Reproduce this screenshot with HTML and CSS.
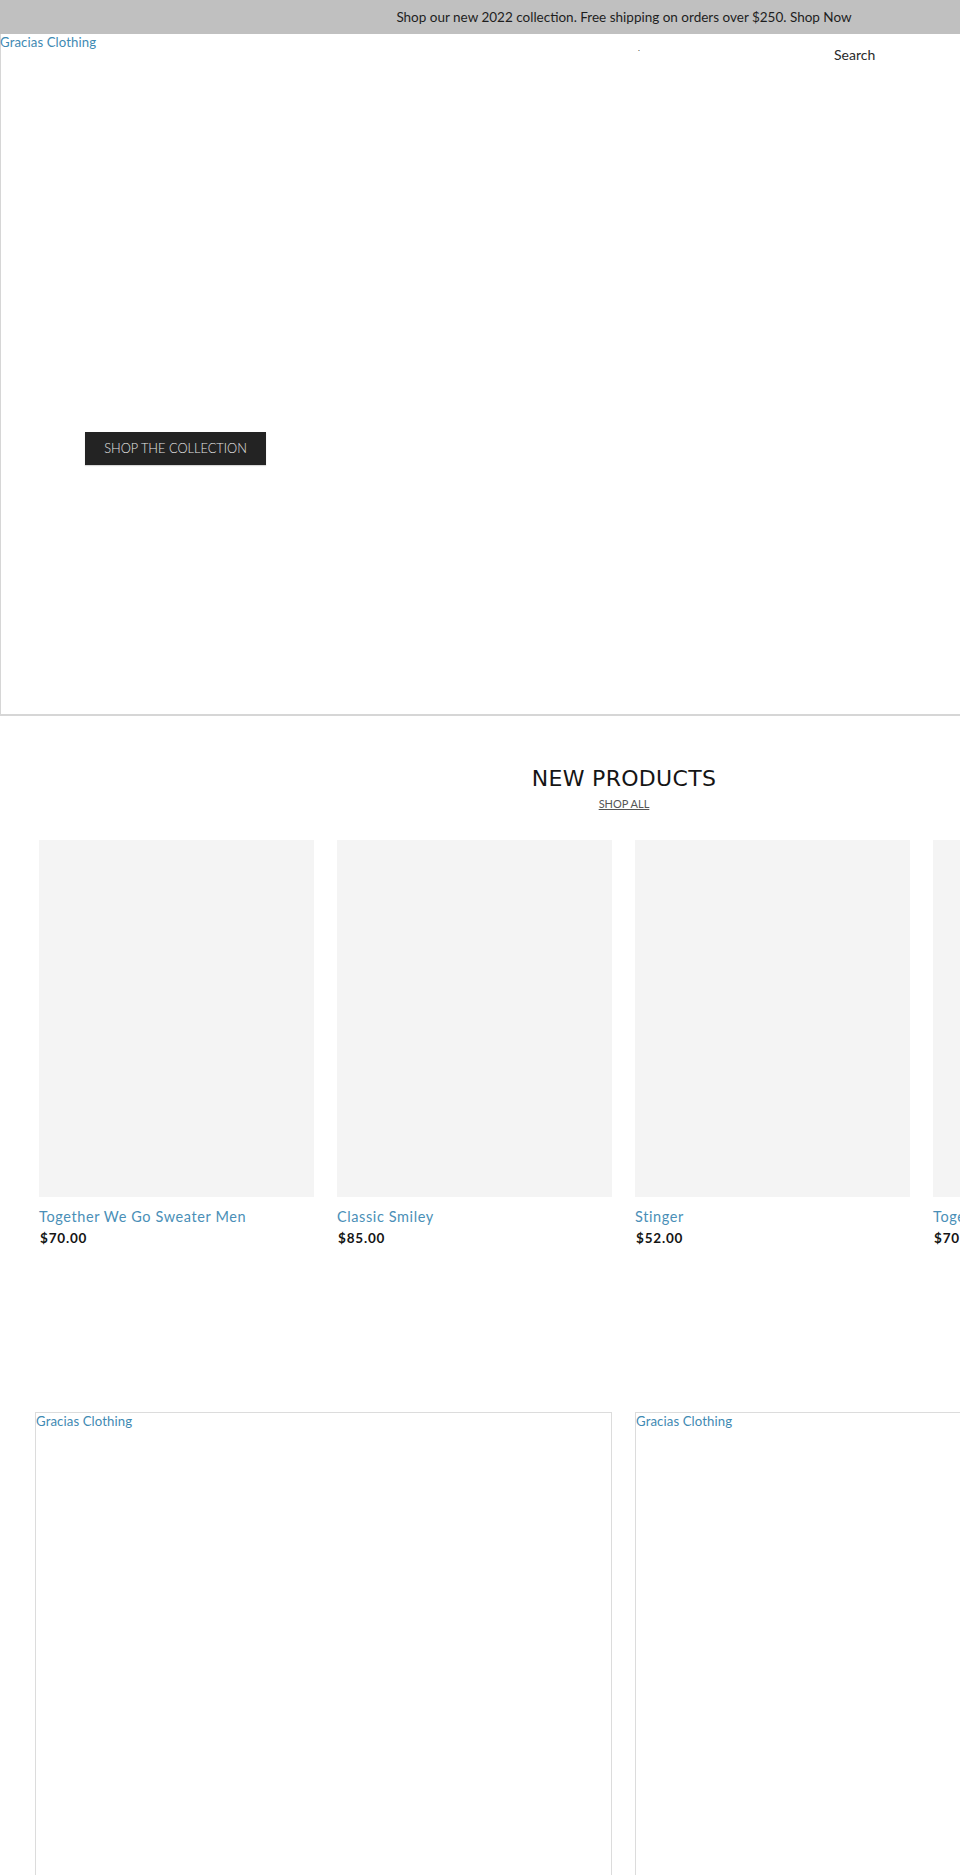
FILE: index.html
```html
<!DOCTYPE html>
<html lang="en">
<head>
<meta charset="utf-8">
<title>Gracias Clothing</title>
<link rel="stylesheet" href="styles.css">
</head>
<body>
<div class="page">
  <div class="announce">Shop our new 2022 collection. Free shipping on orders over $250. Shop Now</div>
  <section class="hero">
    <header class="header">
      <a class="logo" href="#">Gracias Clothing</a>
      <span class="dot">.</span>
      <span class="search">Search</span>
    </header>
    <div class="hero-body">
      <a class="btn" href="#">SHOP THE COLLECTION</a>
    </div>
  </section>

  <section class="products">
    <h2 class="title">NEW PRODUCTS</h2>
    <a class="shop-all" href="#">SHOP ALL</a>
    <div class="grid">
      <div class="card">
        <div class="thumb"></div>
        <div class="name">Together We Go Sweater Men</div>
        <div class="price">$70.00</div>
      </div>
      <div class="card">
        <div class="thumb"></div>
        <div class="name">Classic Smiley</div>
        <div class="price">$85.00</div>
      </div>
      <div class="card">
        <div class="thumb"></div>
        <div class="name">Stinger</div>
        <div class="price">$52.00</div>
      </div>
      <div class="card">
        <div class="thumb"></div>
        <div class="name">Together We Go Sweater Men</div>
        <div class="price">$70.00</div>
      </div>
    </div>
  </section>

  <section class="banners">
    <div class="frame"><span class="alt">Gracias Clothing</span></div>
    <div class="frame"><span class="alt">Gracias Clothing</span></div>
  </section>
</div>
</body>
</html>
```
FILE: styles.css
```css
html, body {
  margin: 0;
  padding: 0;
  overflow-x: hidden;
  background: #fff;
}
body {
  font-family: Lato, "Liberation Sans", sans-serif;
  color: #222;
}
.page {
  width: 1248px;
}
.announce {
  height: 34px;
  line-height: 34px;
  background: #c0c0c0;
  text-align: center;
  font-size: 13.5px;
  color: #1e1e1e;
}
.hero {
  height: 680px;
  border-left: 1px solid #d6d6d6;
  border-bottom: 2px solid #d6d6d6;
  display: flex;
  flex-direction: column;
}
.header {
  display: grid;
  grid-template-columns: 637px 196px auto;
  align-items: start;
}
.logo {
  font-size: 13.2px;
  line-height: 16px;
  color: #3f8ab3;
  text-decoration: none;
  margin-left: -1px;
  letter-spacing: 0.1px;
}
.dot {
  font-size: 8px;
  line-height: 10px;
  color: #333;
  margin-top: 9px;
}
.search {
  font-size: 14px;
  line-height: 16px;
  color: #2a2a2a;
  margin-top: 13px;
}
.hero-body {
  padding: 369px 0 0 84px;
}
.btn {
  display: inline-block;
  width: 181px;
  height: 33px;
  line-height: 33px;
  text-align: center;
  background: #232323;
  color: #e6e6e6;
  font-size: 12.8px;
  font-weight: 300;
  text-decoration: none;
  box-shadow: 0 1px 1px rgba(0,0,0,0.15);
}
.products {
  display: flex;
  flex-direction: column;
  align-items: center;
  padding-top: 47px;
}
.title {
  margin: 0;
  font-family: "DejaVu Sans", sans-serif;
  font-weight: normal;
  font-size: 22px;
  line-height: 32px;
  color: #151515;
  letter-spacing: 0.3px;
}
.shop-all {
  margin-top: 2px;
  font-size: 11px;
  line-height: 14px;
  color: #555;
  text-decoration: underline;
}
.grid {
  margin-top: 29px;
  align-self: stretch;
  padding-left: 39px;
  display: grid;
  grid-template-columns: repeat(4, 275px);
  column-gap: 23px;
}
.thumb {
  height: 357px;
  background: #f4f4f4;
}
.name {
  margin-top: 11px;
  font-size: 14.5px;
  line-height: 18px;
  color: #4a8fb7;
  letter-spacing: 0.6px;
  white-space: nowrap;
}
.price {
  margin-top: 3px;
  padding-left: 1px;
  font-size: 13.5px;
  line-height: 18px;
  font-weight: bold;
  color: #151515;
  letter-spacing: 0.8px;
}
.banners {
  margin-top: 165px;
  padding-left: 35px;
  display: grid;
  grid-template-columns: repeat(2, 577px);
  column-gap: 23px;
}
.frame {
  height: 520px;
  border: 1px solid #dcdcdc;
}
.alt {
  display: block;
  font-size: 13.2px;
  line-height: 16px;
  color: #3f8ab3;
  letter-spacing: 0.1px;
}
```
